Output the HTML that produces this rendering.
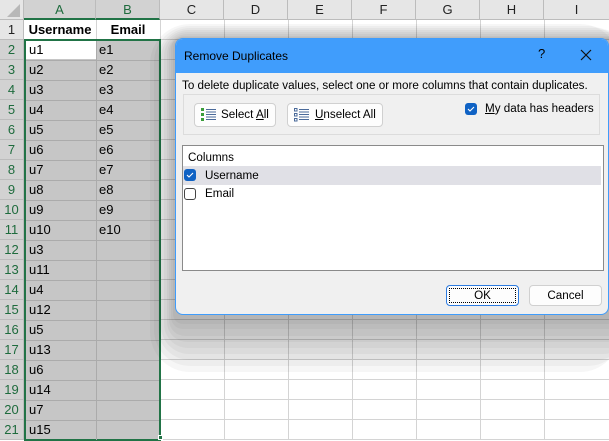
<!DOCTYPE html>
<html><head><meta charset="utf-8"><style>
*{margin:0;padding:0;box-sizing:border-box}
body{width:609px;height:440px;overflow:hidden;background:#fff;font-family:"Liberation Sans",Arial,sans-serif;position:relative}
.a{position:absolute}
.grid{left:24px;top:20px;width:585px;height:420px;background:repeating-linear-gradient(to bottom,transparent 0,transparent 19px,#d4d4d4 19px,#d4d4d4 20px)}
.v{position:absolute;top:0;width:1px;height:440px;background:#d4d4d4}
.hdr{top:0;height:20px;background:#e6e6e6;border-bottom:1px solid #bcbcbc;font-size:13px;color:#222;text-align:center;line-height:20px}
.rh{left:0;width:24px;height:20px;font-size:13px;text-align:center;line-height:20px;border-bottom:1px solid #bcbcbc;border-right:1px solid #bcbcbc}
.cell{font-size:13px;line-height:20px;height:20px;color:#000}
.dlg{left:175px;top:38px;width:434px;height:277px;background:#f0f0f0;border:1px solid #3f9cfb;border-radius:8px;overflow:hidden;font-size:11.65px;color:#000}
.btn{position:absolute;background:#fdfdfd;border:1px solid #d0d0d0;border-radius:4px;font-size:11.65px;line-height:21px}
.cb{position:absolute;width:12px;height:12px;border-radius:3px}
.sh{position:absolute;background:rgba(0,0,0,0.035);border-radius:18px}
</style></head><body>
<div class="a grid"></div>
<div class="v" style="left:96px"></div><div class="v" style="left:160px"></div><div class="v" style="left:224px"></div><div class="v" style="left:288px"></div><div class="v" style="left:352px"></div><div class="v" style="left:416px"></div><div class="v" style="left:480px"></div><div class="v" style="left:544px"></div>
<!-- headers -->
<div class="a hdr" style="left:0;width:24px;background:#e6e6e6;border-right:1px solid #bcbcbc"><svg width="24" height="20" style="display:block"><polygon points="20,4 20,17 7,17" fill="#b8b8b8"/></svg></div>
<div class="a hdr" style="left:24px;width:72px;background:#d2d2d2;color:#1e6b3d;border-bottom:2px solid #217346;border-right:1px solid #bcbcbc">A</div>
<div class="a hdr" style="left:96px;width:64px;background:#d2d2d2;color:#1e6b3d;border-bottom:2px solid #217346;border-right:1px solid #bcbcbc">B</div>
<div class="a hdr" style="left:160px;width:64px;border-right:1px solid #bcbcbc">C</div>
<div class="a hdr" style="left:224px;width:64px;border-right:1px solid #bcbcbc">D</div>
<div class="a hdr" style="left:288px;width:64px;border-right:1px solid #bcbcbc">E</div>
<div class="a hdr" style="left:352px;width:64px;border-right:1px solid #bcbcbc">F</div>
<div class="a hdr" style="left:416px;width:64px;border-right:1px solid #bcbcbc">G</div>
<div class="a hdr" style="left:480px;width:64px;border-right:1px solid #bcbcbc">H</div>
<div class="a hdr" style="left:544px;width:65px">I</div>
<!-- row headers -->
<div class="a rh" style="top:20px;background:#e6e6e6;color:#222">1</div>
<div class="a" style="left:0;top:40px;width:24px;height:400px;background:repeating-linear-gradient(to bottom,#d2d2d2 0,#d2d2d2 19px,#bcbcbc 19px,#bcbcbc 20px);border-right:1px solid #bcbcbc;color:#1e6b3d;font-size:13px;line-height:20px;text-align:center">2<br>3<br>4<br>5<br>6<br>7<br>8<br>9<br>10<br>11<br>12<br>13<br>14<br>15<br>16<br>17<br>18<br>19<br>20<br>21</div>
<!-- header row -->
<div class="a cell" style="left:24px;top:20px;width:72px;text-align:center;font-weight:bold">Username</div>
<div class="a cell" style="left:96px;top:20px;width:64px;text-align:center;font-weight:bold">Email</div>
<!-- selection -->
<div class="a" style="left:24px;top:39px;width:137px;height:402px;background:repeating-linear-gradient(to bottom,#c6c6c6 0,#c6c6c6 19px,#ababab 19px,#ababab 20px);border:2px solid #217346"></div>
<div class="a" style="left:96px;top:41px;width:1px;height:399px;background:#ababab"></div>
<div class="a" style="left:26px;top:41px;width:70px;height:18px;background:#fff"></div>
<div class="a" style="left:158px;top:435px;width:5px;height:5px;background:#217346;border:1px solid #fff"></div>
<div class="a cell" style="left:29px;top:40px">u1<br>u2<br>u3<br>u4<br>u5<br>u6<br>u7<br>u8<br>u9<br>u10<br>u3<br>u11<br>u4<br>u12<br>u5<br>u13<br>u6<br>u14<br>u7<br>u15</div>
<div class="a cell" style="left:99px;top:40px">e1<br>e2<br>e3<br>e4<br>e5<br>e6<br>e7<br>e8<br>e9<br>e10</div>
<!-- shadow layers -->
<div class="sh" style="left:150px;top:24px;width:470px;height:348px;border-radius:40px"></div>
<div class="sh" style="left:154px;top:26px;width:470px;height:340px;border-radius:36px"></div>
<div class="sh" style="left:158px;top:28px;width:470px;height:332px;border-radius:32px"></div>
<div class="sh" style="left:161px;top:30px;width:470px;height:324px;border-radius:28px"></div>
<div class="sh" style="left:164px;top:32px;width:470px;height:316px;border-radius:24px"></div>
<div class="sh" style="left:167px;top:34px;width:470px;height:308px;border-radius:20px"></div>
<div class="sh" style="left:169px;top:36px;width:470px;height:300px;border-radius:16px"></div>
<div class="sh" style="left:171px;top:37px;width:470px;height:292px;border-radius:12px"></div>
<div class="sh" style="left:173px;top:38px;width:470px;height:286px;border-radius:10px"></div>
<!-- dialog -->
<div class="a dlg">
 <div class="a" style="left:0;top:0;width:434px;height:34px;background:#409dfc"></div>
 <div class="a" style="left:8px;top:10px;font-size:12px">Remove Duplicates</div>
 <div class="a" style="left:362px;top:7px;font-size:13px">?</div>
 <svg class="a" style="left:404px;top:10px" width="12" height="12"><path d="M1 1L11 11M11 1L1 11" stroke="#111" stroke-width="1.2"/></svg>
 <div class="a" style="left:6px;top:40px">To delete duplicate values, select one or more columns that contain duplicates.</div>
 <div class="a" style="left:7px;top:55px;width:417px;height:41px;border:1px solid #dcdcdc"></div>
 <div class="btn" style="left:18px;top:64px;width:82px;height:24px;padding-left:26px">Select <u>A</u>ll</div>
 <svg class="a" style="left:25px;top:69px" width="16" height="14"><g fill="#3a9d3a"><rect x="0" y="0" width="3" height="3"/><rect x="0" y="5" width="3" height="3"/><rect x="0" y="10" width="3" height="3"/></g><g stroke="#4a6a9a"><path d="M5 1.5H15M5 4H15M5 6.5H15M5 9H15M5 11.5H15"/></g></svg>
 <div class="btn" style="left:111px;top:64px;width:96px;height:24px;padding-left:27px"><u>U</u>nselect All</div>
 <svg class="a" style="left:118px;top:69px" width="16" height="14"><g fill="none" stroke="#4a6a9a"><rect x=".5" y=".5" width="2.5" height="2.5"/><rect x=".5" y="5.5" width="2.5" height="2.5"/><rect x=".5" y="10.5" width="2.5" height="2.5"/><path d="M5 1.5H15M5 4H15M5 6.5H15M5 9H15M5 11.5H15"/></g></svg>
 <div class="cb" style="left:289px;top:64px;background:#0f62c4"><svg width="12" height="12" style="display:block"><path d="M3 6L5 8L9 4" stroke="#fff" fill="none" stroke-width="1.1"/></svg></div>
 <div class="a" style="left:309px;top:63px"><u>M</u>y data has headers</div>
 <div class="a" style="left:6px;top:106px;width:422px;height:126px;background:#fff;border:1px solid #8a8a8a"></div>
 <div class="a" style="left:12px;top:112px">Columns</div>
 <div class="a" style="left:7px;top:127px;width:418px;height:19px;background:#e0e0e6"></div>
 <div class="cb" style="left:8px;top:130px;background:#0f62c4"><svg width="12" height="12" style="display:block"><path d="M3 6L5 8L9 4" stroke="#fff" fill="none" stroke-width="1.1"/></svg></div>
 <div class="a" style="left:29px;top:130px">Username</div>
 <div class="cb" style="left:8px;top:149px;border:1px solid #444;background:#fff"></div>
 <div class="a" style="left:29px;top:148px">Email</div>
 <div class="btn" style="left:270px;top:246px;width:73px;height:21px;border:1px solid #2c7be0;text-align:center;line-height:19px"><div style="position:absolute;left:2px;top:2px;right:2px;bottom:2px;border:1px dotted #000"></div>OK</div>
 <div class="btn" style="left:353px;top:246px;width:73px;height:21px;text-align:center;line-height:19px">Cancel</div>
</div>
</body></html>
